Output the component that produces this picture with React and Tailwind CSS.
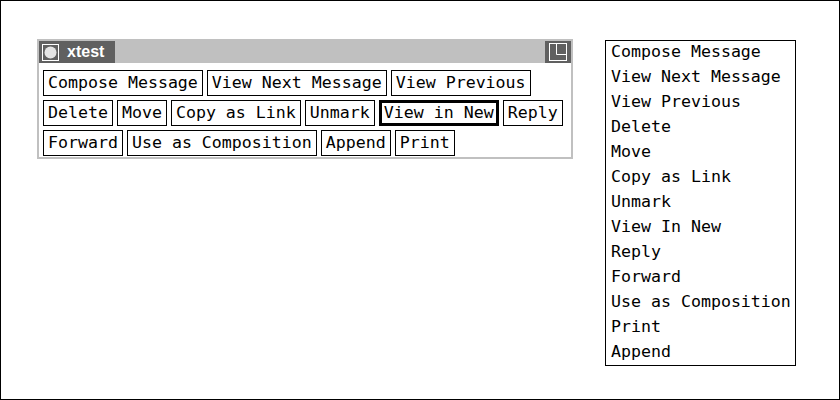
import React from "react";

const rows = [
    ["Compose Message", "View Next Message", "View Previous"],
    ["Delete", "Move", "Copy as Link", "Unmark", "View in New", "Reply"],
    ["Forward", "Use as Composition", "Append", "Print"],
]

const menuItems = [
    "Compose Message",
    "View Next Message",
    "View Previous",
    "Delete",
    "Move",
    "Copy as Link",
    "Unmark",
    "View In New",
    "Reply",
    "Forward",
    "Use as Composition",
    "Print",
    "Append",
]

const mono = { fontFamily: '"DejaVu Sans Mono", monospace' }

function ActionButton({ label }) {
    const isDefault = label === "View in New"
    return (
        <button
            className={`h-[26px] leading-[20px] text-[16.6px] text-black bg-white whitespace-pre ${
                isDefault ? "border-[3px] border-black px-[2px]" : "border border-black px-[4px]"
            }`}
            style={mono}
        >
            {label}
        </button>
    )
}

function CircleIcon() {
    return (
        <svg width="17" height="17" viewBox="0 0 17 17">
            <rect x="0.5" y="0.5" width="16" height="16" fill="none" stroke="#ffffff" />
            <circle cx="8.5" cy="8.5" r="6" fill="#e4e4e4" />
        </svg>
    )
}

function MaximizeIcon() {
    return (
        <svg width="18" height="18" viewBox="0 0 18 18">
            <rect x="0.5" y="0.5" width="17" height="17" fill="none" stroke="#ffffff" />
            <path d="M7.5 0.5 V11.5 H17.5" fill="none" stroke="#ffffff" />
        </svg>
    )
}

export default function App() {
    return (
        <div className="w-[840px] h-[400px] border border-black bg-white flex items-start pl-[36px] pt-[38px]">
            <div className="w-[536px] border-2 border-[#c0c0c0] bg-white">
                <div className="flex h-[22px]">
                    <div className="flex items-center gap-[8px] bg-[#606060] pl-[3px] w-[76px]">
                        <CircleIcon />
                        <span
                            className="text-white text-[16px] font-bold leading-none"
                            style={{ fontFamily: '"Liberation Sans", Arial, sans-serif' }}
                        >
                            xtest
                        </span>
                    </div>
                    <div className="flex-1 bg-[#c0c0c0]" />
                    <div className="flex items-center justify-center bg-[#606060] w-[26px]">
                        <MaximizeIcon />
                    </div>
                </div>
                <div className="flex flex-col gap-[4px] pl-[4px] pt-[7px] pb-[1px]">
                    {rows.map((row, index) => (
                        <div key={index} className="flex gap-[4px]">
                            {row.map((label) => (
                                <ActionButton key={label} label={label} />
                            ))}
                        </div>
                    ))}
                </div>
            </div>
            <ul className="ml-[32px] mt-[1px] w-[191px] border border-black bg-white pl-[5px] pb-[3px] flex flex-col gap-[4px]">
                {menuItems.map((item, index) => (
                    <li key={index} className="leading-[21px] text-[16.6px] text-black whitespace-pre" style={mono}>
                        {item}
                    </li>
                ))}
            </ul>
        </div>
    )
}
